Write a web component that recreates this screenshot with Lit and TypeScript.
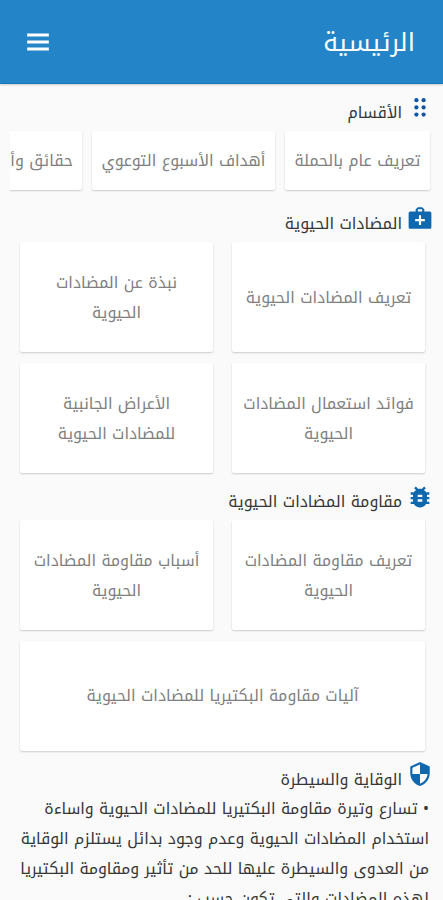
import { LitElement, html, css, svg } from "lit";
import { customElement, property } from "lit/decorators.js";

const icons: Record<string, unknown> = {
  dots: svg`<g fill="#0f56a5"><circle cx="8.4" cy="4.2" r="2.1"/><circle cx="15.6" cy="4.2" r="2.1"/><circle cx="8.4" cy="11.4" r="2.1"/><circle cx="15.6" cy="11.4" r="2.1"/><circle cx="8.4" cy="18.6" r="2.1"/><circle cx="15.6" cy="18.6" r="2.1"/></g>`,
  kit: svg`<path fill-rule="evenodd" d="M21 6h-5V4l-2-2h-4L8 4v2H3c-.9 0-1.500.7-1.500 1.500v13c0 .8.6 1.500 1.500 1.500h18c.9 0 1.500-.7 1.500-1.500v-13c0-.8-.6-1.500-1.500-1.500zM10 4h4v2h-4V4zm6.500 11H13v3.500h-2V15H7.500v-2H11V9.500h2V13h3.500v2z"/>`,
  bug: svg`<path d="M20 8h-2.810c-.45-.78-1.070-1.450-1.820-1.960L17 4.410 15.590 3l-2.170 2.170C12.960 5.060 12.490 5 12 5c-.49 0-.96.06-1.410.17L8.410 3 7 4.410l1.620 1.630C7.880 6.550 7.260 7.220 6.810 8H4v2h2.090c-.05.33-.09.66-.09 1v1H4v2h2v1c0 .34.04.67.09 1H4v2h2.810c1.040 1.790 2.970 3 5.190 3s4.150-1.210 5.190-3H20v-2h-2.090c.05-.33.09-.66.09-1v-1h2v-2h-2v-1c0-.34-.04-.67-.09-1H20V8zm-6 8h-4v-2h4v2zm0-4h-4v-2h4v2z"/>`,
  shield: svg`<path d="M12 1 3 5v6c0 5.550 3.840 10.740 9 12 5.160-1.260 9-6.450 9-12V5l-9-4zm0 10.990h7c-.53 4.120-3.280 7.790-7 8.940V12H5V6.300l7-3.110v8.800z"/>`,
};

@customElement("section-title")
class SectionTitle extends LitElement {
  @property() icon = "";
  @property() label = "";

  static styles = css`
    :host { display: flex; align-items: flex-start; height: 30px; padding-inline-start: 10px; }
    svg { width: 26px; height: 26px; fill: #0f67ae; flex: none; }
    .dots { width: 24px; height: 24px; margin: 1px 1px 0; }
    .kit { margin-top: -1px; }
    .bug { width: 28px; height: 28px; margin: -1px -1px 0; }
    .shield { margin-top: -1px; }
    h2 { margin: 3px 5px 0 0; font-size: 15.9px; font-weight: 400; line-height: 30px; color: #363636; white-space: nowrap; }
  `;

  render() {
    return html`<svg class=${this.icon} viewBox="0 0 24 24">${icons[this.icon]}</svg>
      <h2>${this.label}</h2>`;
  }
}

@customElement("app-root")
class AppRoot extends LitElement {
  static styles = css`
    :host {
      display: block; box-sizing: border-box; height: 900px; overflow: hidden; direction: rtl;
      background: #fafafa; color: #363636;
      font: 400 15.85px/30px "Noto Kufi Arabic", "Droid Arabic Kufi", "DejaVu Sans", sans-serif;
    }
    header {
      display: flex; align-items: center; justify-content: space-between; box-sizing: border-box;
      height: 84px; padding: 2px 28px 0 25px; background: #2385c8; color: #fff;
      border-bottom: 1px solid #1479be; box-shadow: 0 1px 2px #0003;
    }
    h1 { margin: 0; font-size: 25.2px; font-weight: 400; line-height: 46px; }
    .menu { width: 26px; height: 26px; margin-bottom: 1px; fill: #fff; }
    .menu svg { display: block; }
    .first { margin-top: 11px; }
    .chips { display: flex; gap: 10px; margin: 3px 10px 0; padding: 3px 3px 5px 0; overflow: hidden; height: 59px; }
    .chip, .card {
      background: #fff; color: #808080; display: flex; align-items: center; justify-content: center;
      text-align: center; border-radius: 2px; box-shadow: 0 1px 2px #00000030;
    }
    .chip { flex: none; box-sizing: border-box; white-space: nowrap; padding-top: 1px; }
    .c1 { width: 145px; }
    .c2 { width: 183px; }
    .c3 { width: 145px; justify-content: flex-start; padding-right: 9px; }
    .grid { display: grid; grid-template-columns: 193px 193px; gap: 11px 19px; margin: 0 18px 0 20px; }
    .card { height: 110px; box-sizing: border-box; padding: 1px 4px 0; white-space: nowrap; }
    .wide { grid-column: span 2; padding-top: 0; }
    .kit-title { margin-top: 11px; }
    .kit-grid { margin-top: 6px; }
    .bug-title { margin-top: 11px; }
    .bug-grid { margin-top: 6px; }
    .shield-title { margin-top: 11px; }
    p { margin: 2px 14px 0; font-size: 15.8px; white-space: nowrap; }
  `;

  render() {
    return html`
      <header>
        <h1>الرئيسية</h1>
        <div class="menu"><svg viewBox="0 0 24 24"><path d="M2 4.200h20v2.800H2zM2 10.600h20v2.800H2zM2 17h20v2.800H2z"/></svg></div>
      </header>
      <section-title class="first" icon="dots" label="الأقسام"></section-title>
      <div class="chips">
        <div class="chip c1">تعريف عام بالحملة</div>
        <div class="chip c2">أهداف الأسبوع التوعوي</div>
        <div class="chip c3">حقائق وأرقام</div>
      </div>
      <section-title class="kit-title" icon="kit" label="المضادات الحيوية"></section-title>
      <div class="grid kit-grid">
        <div class="card">تعريف المضادات الحيوية</div>
        <div class="card">نبذة عن المضادات<br>الحيوية</div>
        <div class="card">فوائد استعمال المضادات<br>الحيوية</div>
        <div class="card">الأعراض الجانبية<br>للمضادات الحيوية</div>
      </div>
      <section-title class="bug-title" icon="bug" label="مقاومة المضادات الحيوية"></section-title>
      <div class="grid bug-grid">
        <div class="card">تعريف مقاومة المضادات<br>الحيوية</div>
        <div class="card">أسباب مقاومة المضادات<br>الحيوية</div>
        <div class="card wide">آليات مقاومة البكتيريا للمضادات الحيوية</div>
      </div>
      <section-title class="shield-title" icon="shield" label="الوقاية والسيطرة"></section-title>
      <p>• تسارع وتيرة مقاومة البكتيريا للمضادات الحيوية واساءة<br>استخدام المضادات الحيوية وعدم وجود بدائل يستلزم الوقاية<br>من العدوى والسيطرة عليها للحد من تأثير ومقاومة البكتيريا<br>لهذه المضادات والتي تكون حسب :</p>
    `;
  }
}
